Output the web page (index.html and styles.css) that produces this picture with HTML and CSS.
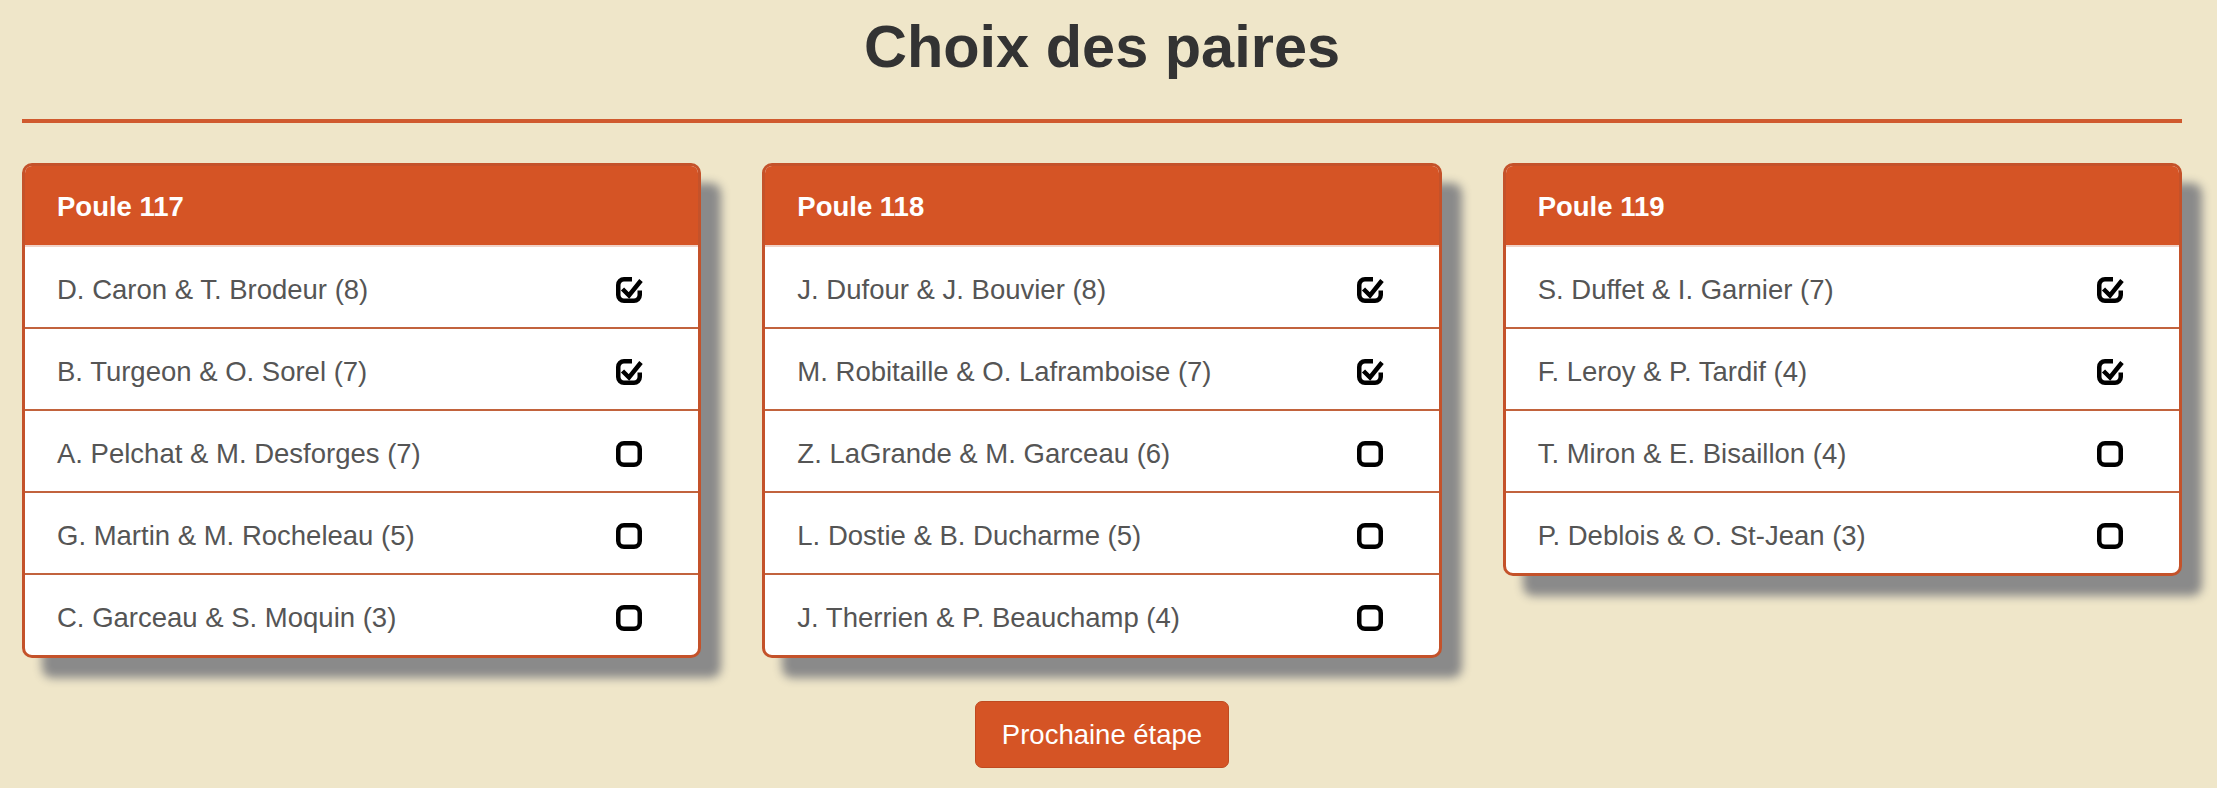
FILE: index.html
```html
<!DOCTYPE html>
<html lang="fr">
<head>
<meta charset="utf-8">
<title>Choix des paires</title>
<link rel="stylesheet" href="styles.css">
</head>
<body>
<div class="page">
  <h1 class="title">Choix des paires</h1>
  <hr class="rule">
  <div class="pools">
    <section class="pool">
      <header class="pool-head">Poule 117</header>
      <div class="pair"><span>D. Caron &amp; T. Brodeur (8)</span><svg class="box" viewBox="0 0 27 26" width="27" height="26"><path d="M16 2.25H8A5.75 5.75 0 0 0 2.25 8V18A5.75 5.75 0 0 0 8 23.75H18A5.75 5.75 0 0 0 23.75 18V13.5"/><path d="M6.5 12L13 18.5L25 3.5"/></svg></div>
      <div class="pair"><span>B. Turgeon &amp; O. Sorel (7)</span><svg class="box" viewBox="0 0 27 26" width="27" height="26"><path d="M16 2.25H8A5.75 5.75 0 0 0 2.25 8V18A5.75 5.75 0 0 0 8 23.75H18A5.75 5.75 0 0 0 23.75 18V13.5"/><path d="M6.5 12L13 18.5L25 3.5"/></svg></div>
      <div class="pair"><span>A. Pelchat &amp; M. Desforges (7)</span><svg class="box" viewBox="0 0 27 26" width="27" height="26"><rect x="2.25" y="2.25" width="21.5" height="21.5" rx="5.75"/></svg></div>
      <div class="pair"><span>G. Martin &amp; M. Rocheleau (5)</span><svg class="box" viewBox="0 0 27 26" width="27" height="26"><rect x="2.25" y="2.25" width="21.5" height="21.5" rx="5.75"/></svg></div>
      <div class="pair"><span>C. Garceau &amp; S. Moquin (3)</span><svg class="box" viewBox="0 0 27 26" width="27" height="26"><rect x="2.25" y="2.25" width="21.5" height="21.5" rx="5.75"/></svg></div>
    </section>
    <section class="pool">
      <header class="pool-head">Poule 118</header>
      <div class="pair"><span>J. Dufour &amp; J. Bouvier (8)</span><svg class="box" viewBox="0 0 27 26" width="27" height="26"><path d="M16 2.25H8A5.75 5.75 0 0 0 2.25 8V18A5.75 5.75 0 0 0 8 23.75H18A5.75 5.75 0 0 0 23.75 18V13.5"/><path d="M6.5 12L13 18.5L25 3.5"/></svg></div>
      <div class="pair"><span>M. Robitaille &amp; O. Laframboise (7)</span><svg class="box" viewBox="0 0 27 26" width="27" height="26"><path d="M16 2.25H8A5.75 5.75 0 0 0 2.25 8V18A5.75 5.75 0 0 0 8 23.75H18A5.75 5.75 0 0 0 23.75 18V13.5"/><path d="M6.5 12L13 18.5L25 3.5"/></svg></div>
      <div class="pair"><span>Z. LaGrande &amp; M. Garceau (6)</span><svg class="box" viewBox="0 0 27 26" width="27" height="26"><rect x="2.25" y="2.25" width="21.5" height="21.5" rx="5.75"/></svg></div>
      <div class="pair"><span>L. Dostie &amp; B. Ducharme (5)</span><svg class="box" viewBox="0 0 27 26" width="27" height="26"><rect x="2.25" y="2.25" width="21.5" height="21.5" rx="5.75"/></svg></div>
      <div class="pair"><span>J. Therrien &amp; P. Beauchamp (4)</span><svg class="box" viewBox="0 0 27 26" width="27" height="26"><rect x="2.25" y="2.25" width="21.5" height="21.5" rx="5.75"/></svg></div>
    </section>
    <section class="pool">
      <header class="pool-head">Poule 119</header>
      <div class="pair"><span>S. Duffet &amp; I. Garnier (7)</span><svg class="box" viewBox="0 0 27 26" width="27" height="26"><path d="M16 2.25H8A5.75 5.75 0 0 0 2.25 8V18A5.75 5.75 0 0 0 8 23.75H18A5.75 5.75 0 0 0 23.75 18V13.5"/><path d="M6.5 12L13 18.5L25 3.5"/></svg></div>
      <div class="pair"><span>F. Leroy &amp; P. Tardif (4)</span><svg class="box" viewBox="0 0 27 26" width="27" height="26"><path d="M16 2.25H8A5.75 5.75 0 0 0 2.25 8V18A5.75 5.75 0 0 0 8 23.75H18A5.75 5.75 0 0 0 23.75 18V13.5"/><path d="M6.5 12L13 18.5L25 3.5"/></svg></div>
      <div class="pair"><span>T. Miron &amp; E. Bisaillon (4)</span><svg class="box" viewBox="0 0 27 26" width="27" height="26"><rect x="2.25" y="2.25" width="21.5" height="21.5" rx="5.75"/></svg></div>
      <div class="pair"><span>P. Deblois &amp; O. St-Jean (3)</span><svg class="box" viewBox="0 0 27 26" width="27" height="26"><rect x="2.25" y="2.25" width="21.5" height="21.5" rx="5.75"/></svg></div>
    </section>
  </div>
  <div class="actions">
    <button class="next" type="button">Prochaine étape</button>
  </div>
</div>
</body>
</html>
```
FILE: styles.css
```css
html, body {
  margin: 0;
  padding: 0;
  background: #efe6c9;
}
body {
  font-family: "Liberation Sans", Arial, sans-serif;
  color: #555;
}
.page {
  padding: 0 35px 0 22px;
}
.title {
  margin: 14px 0 0;
  text-align: center;
  font-size: 59.5px;
  line-height: 66px;
  font-weight: bold;
  color: #333;
}
.rule {
  margin: 39px 0 40px;
  height: 4px;
  border: 0;
  background: #d05a2e;
}
.pools {
  display: grid;
  grid-template-columns: repeat(3, 1fr);
  column-gap: 61px;
  align-items: start;
}
.pool {
  background: #fff;
  border: 3px solid #c4522a;
  border-radius: 10px;
  overflow: hidden;
  box-shadow: 20px 20px 10px #8a8a8a;
}
.pool-head {
  background: #d55425;
  color: #fff;
  font-weight: bold;
  font-size: 27.5px;
  line-height: 33px;
  padding: 24px 32px 22px;
  border-bottom: 2px solid #f0d3c9;
}
.pair {
  display: flex;
  align-items: center;
  justify-content: space-between;
  font-size: 27.5px;
  line-height: 33px;
  padding: 26px 55px 21px 32px;
  border-bottom: 2px solid #c2633d;
}
.pair:last-child {
  border-bottom: 0;
}
.box {
  flex: none;
  fill: none;
  stroke: #000;
  stroke-width: 4.5;
  stroke-linejoin: miter;
}
.actions {
  display: flex;
  justify-content: center;
  margin-top: 43px;
}
.next {
  font-family: "Liberation Sans", Arial, sans-serif;
  font-size: 27.5px;
  line-height: 33px;
  color: #fff;
  background: #d55425;
  border: 1px solid #bf4a20;
  border-radius: 7px;
  padding: 16px 25.5px;
}
```
